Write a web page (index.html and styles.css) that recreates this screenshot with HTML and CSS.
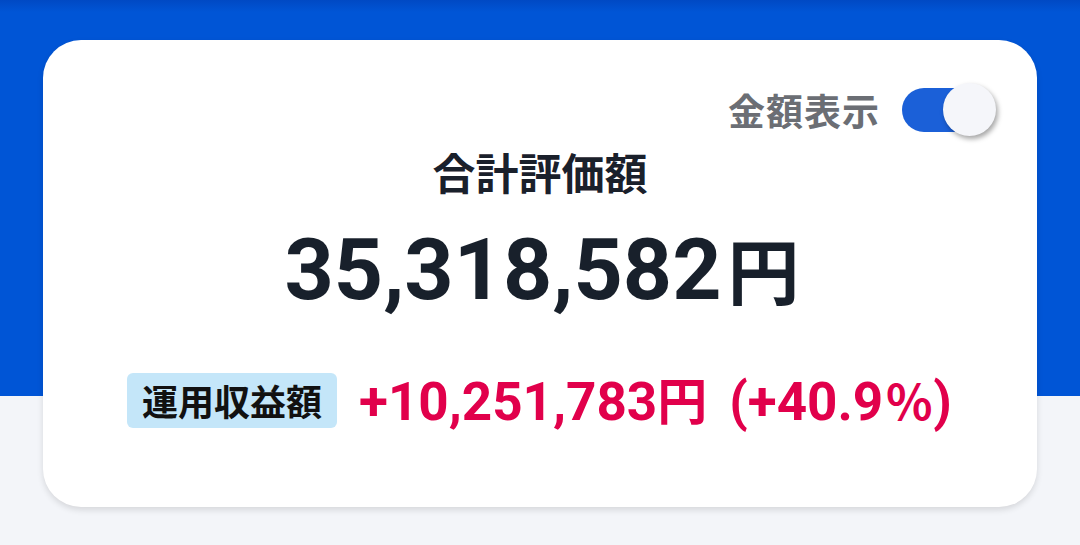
FILE: index.html
```html
<!DOCTYPE html>
<html lang="ja">
<head>
<meta charset="utf-8">
<link rel="stylesheet" href="styles.css">
</head>
<body>
<div class="page">
  <div class="card">
    <div class="toggle-row">
      <span class="toggle-label">金額表示</span>
      <span class="toggle"><span class="thumb"></span></span>
    </div>
    <div class="title">合計評価額</div>
    <div class="total"><span class="num">35,318,582</span><span class="yen">円</span></div>
    <div class="profit-row">
      <span class="badge">運用収益額</span>
      <span class="profit"><span class="pnum">+10,251,783</span><span class="pyen">円</span><span class="pnum paren">(+40.9</span><span class="pct">％</span><span class="pnum">)</span></span>
    </div>
  </div>
</div>
</body>
</html>
```
FILE: styles.css
```css
html, body {
  margin: 0;
  padding: 0;
}
body {
  width: 1080px;
  height: 545px;
  overflow: hidden;
  font-family: Roboto, "Noto Sans CJK JP", sans-serif;
  background: linear-gradient(to bottom, #0049c4 0px, #0055d6 12px, #0055d6 396px, #f3f5f9 396px, #f3f5f9 100%);
}
.page {
  padding: 40px 43px 0 43px;
}
.card {
  height: 467px;
  box-sizing: border-box;
  background: #ffffff;
  border-radius: 38px;
  box-shadow: 0 3px 6px rgba(0, 0, 0, 0.12);
  padding: 42px 41px 0 41px;
  display: flex;
  flex-direction: column;
}
.toggle-row {
  height: 56px;
  display: flex;
  align-items: center;
  justify-content: flex-end;
  gap: 22px;
}
.toggle-label {
  font-family: "Noto Sans CJK JP", sans-serif;
  font-weight: 700;
  font-size: 37px;
  color: #6b6e74;
  letter-spacing: 1px;
}
.toggle {
  position: relative;
  width: 94px;
  height: 44px;
}
.toggle::before {
  content: "";
  display: block;
  width: 82px;
  height: 44px;
  border-radius: 22px;
  background: #1b60d8;
}
.thumb {
  position: absolute;
  right: 0;
  top: -5px;
  width: 53px;
  height: 53px;
  border-radius: 50%;
  background: #f5f6fa;
  box-shadow: 2px 3px 5px rgba(0, 0, 0, 0.35);
}
.title {
  margin-top: 8px;
  height: 50px;
  line-height: 50px;
  text-align: center;
  font-family: "Noto Sans CJK JP", sans-serif;
  font-weight: 700;
  font-size: 43px;
  color: #1a202b;
}
.total {
  margin-top: 22px;
  height: 100px;
  display: flex;
  justify-content: center;
  align-items: baseline;
  color: #18202b;
  font-weight: 700;
  line-height: 100px;
  padding-left: 4px;
}
.num {
  font-size: 86px;
}
.yen {
  font-family: "Noto Sans CJK JP", sans-serif;
  font-size: 72px;
  margin-left: 6px;
}
.profit-row {
  margin-top: 54px;
  height: 56px;
  display: flex;
  align-items: center;
  gap: 22px;
  padding-left: 43px;
}
.badge {
  background: #c4e6f9;
  border-radius: 6px;
  padding: 0 15px;
  height: 55px;
  line-height: 55px;
  font-family: "Noto Sans CJK JP", sans-serif;
  font-weight: 700;
  font-size: 36px;
  color: #111111;
}
.profit {
  color: #e1004b;
  font-weight: 700;
  font-size: 53px;
  line-height: 56px;
  white-space: pre;
}
.pyen {
  font-family: "Noto Sans CJK JP", sans-serif;
  font-size: 50px;
}
.paren {
  margin-left: 22px;
}
.pct {
  font-family: "Noto Sans CJK JP", sans-serif;
  font-size: 48px;
  margin-left: 2px;
}
```
